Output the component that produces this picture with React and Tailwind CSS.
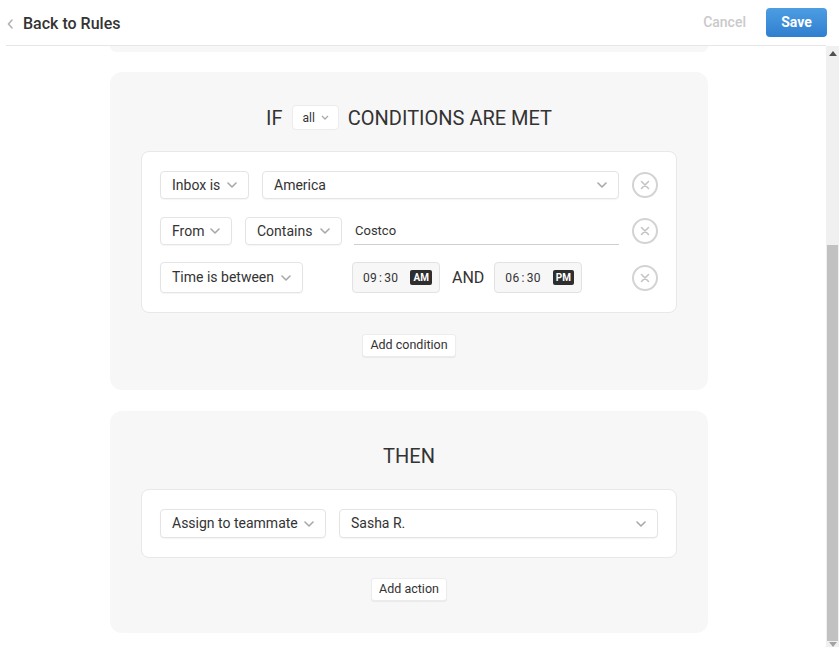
import React from "react";

const Chevron = ({ className = "" }) => (
  <svg width="10" height="6" viewBox="0 0 10 6" className={className}>
    <path d="M1 1l4 4 4-4" fill="none" stroke="#a8a8a8" strokeWidth="1.6" strokeLinecap="round" strokeLinejoin="round" />
  </svg>
);

const Select = ({ label, w, h = "h-[28px]" }) => (
  <div className={`${w} ${h} flex items-center justify-between bg-white border border-[#e4e4e4] rounded-[4px] shadow-[0_1px_1px_rgba(0,0,0,0.04)] pl-[11px] pr-[11px] text-[14px] text-[#333]`}>
    <span>{label}</span>
    <Chevron />
  </div>
);

const XCircle = () => (
  <div className="w-[26px] h-[26px] rounded-full border-2 border-[#d3d3d3] flex items-center justify-center">
    <svg width="10" height="10" viewBox="0 0 10 10">
      <path d="M1.5 1.5l7 7M8.5 1.5l-7 7" stroke="#c4c4c4" strokeWidth="1.6" strokeLinecap="round" />
    </svg>
  </div>
);

const TimeBox = ({ t, p }) => (
  <div className="w-[88px] h-[31px] flex items-center bg-[#f7f7f7] border border-[#e2e2e2] rounded-[4px] pl-[10px] text-[12px] text-[#333]">
    <span className="tracking-[0.3px]">{t.split(":")[0]}<span className="mx-[2px]">:</span>{t.split(":")[1]}</span>
    <span className="ml-[12px] bg-[#2e2e2e] text-white text-[10px] font-bold rounded-[2px] px-[3px] h-[15px] flex items-center">{p}</span>
  </div>
);

const SmallBtn = ({ children, w }) => (
  <div className={`${w} h-[23px] bg-white border border-[#ececec] rounded-[3px] shadow-[0_1px_1px_rgba(0,0,0,0.06)] flex items-center justify-center text-[12.5px] text-[#333]`}>
    {children}
  </div>
);

export default function App() {
  return (
    <div className="w-[839px] h-[647px] overflow-hidden bg-white flex flex-col" style={{ fontFamily: "Roboto, 'Liberation Sans', sans-serif" }}>
      <div className="h-[46px] shrink-0 flex items-center border-b border-[#e6e6e6] ml-[6px] mr-[13px]">
        <svg width="6" height="10" viewBox="0 0 6 10" className="ml-[1px] mt-[2px]">
          <path d="M5 1L1.5 5 5 9" fill="none" stroke="#b0b0b0" strokeWidth="1.5" strokeLinecap="round" />
        </svg>
        <span className="ml-[10px] mt-[2px] text-[16px] text-[#333] font-medium">Back to Rules</span>
        <span className="ml-auto text-[14px] font-medium text-[#cacaca]">Cancel</span>
        <div className="ml-[20px] w-[61px] h-[29px] rounded-[4px] bg-gradient-to-b from-[#4d9de2] to-[#2f7fd0] flex items-center justify-center text-white text-[14px] font-bold mr-[-1px]">
          Save
        </div>
      </div>
      <div className="flex-1 flex min-h-0">
        <div className="flex-1 min-h-0 overflow-hidden pl-[110px]">
          <div className="w-[598px] h-[6px] bg-[#f7f7f7] rounded-b-[12px]" />
          <div className="w-[598px] mt-[20px] bg-[#f7f7f7] rounded-[12px] pt-[33px] pb-[33px] pl-[31px] pr-[31px]">
            <div className="flex items-center justify-center gap-[8px] text-[20px] text-[#333] h-[25px]">
              <span className="mr-[2px]">IF</span>
              <div className="h-[25px] bg-white rounded-[4px] border border-[#ececec] flex items-center px-[9px] gap-[6px] text-[12px]">
                <span>all</span>
                <svg width="8" height="5" viewBox="0 0 8 5"><path d="M1 1l3 3 3-3" fill="none" stroke="#aaa" strokeWidth="1.3" /></svg>
              </div>
              <span className="ml-[1px]">CONDITIONS ARE MET</span>
            </div>
            <div className="mt-[21px] bg-white border border-[#e8e8e8] rounded-[8px] pt-[19px] pb-[19px] pl-[18px] pr-[18px]">
              <div className="flex items-center">
                <Select label="Inbox is" w="w-[89px]" />
                <div className="ml-[13px]"><Select label="America" w="w-[357px]" /></div>
                <div className="ml-auto"><XCircle /></div>
              </div>
              <div className="flex items-center mt-[18px]">
                <Select label="From" w="w-[72px]" />
                <div className="ml-[13px]"><Select label="Contains" w="w-[97px]" /></div>
                <div className="ml-[12px] w-[265px] h-[28px] border-b border-[#cfcfcf] flex items-center pl-[1px] text-[13px] text-[#333]">Costco</div>
                <div className="ml-auto"><XCircle /></div>
              </div>
              <div className="flex items-center mt-[17px]">
                <Select label="Time is between" w="w-[143px]" h="h-[31px]" />
                <div className="ml-[49px]"><TimeBox t="09:30" p="AM" /></div>
                <span className="ml-[12px] text-[16px] text-[#333]">AND</span>
                <div className="ml-[10px]"><TimeBox t="06:30" p="PM" /></div>
                <div className="ml-auto"><XCircle /></div>
              </div>
            </div>
            <div className="flex justify-center mt-[21px]">
              <SmallBtn w="w-[94px]">Add condition</SmallBtn>
            </div>
          </div>
          <div className="w-[598px] mt-[21px] bg-[#f7f7f7] rounded-[12px] pt-[32px] pb-[32px] pl-[31px] pr-[31px]">
            <div className="flex items-center justify-center text-[20px] text-[#333] h-[25px]">THEN</div>
            <div className="mt-[21px] bg-white border border-[#e8e8e8] rounded-[8px] pt-[19px] pb-[19px] pl-[18px] pr-[18px]">
              <div className="flex items-center">
                <Select label="Assign to teammate" w="w-[166px]" h="h-[29px]" />
                <div className="ml-[13px]"><Select label="Sasha R." w="w-[319px]" h="h-[29px]" /></div>
              </div>
            </div>
            <div className="flex justify-center mt-[20px]">
              <SmallBtn w="w-[76px]">Add action</SmallBtn>
            </div>
          </div>
        </div>
        <div className="w-[13px] bg-[#f0f0f0] flex flex-col items-center relative">
          <svg width="8" height="5" viewBox="0 0 8 5" className="mt-[5px]"><path d="M0 5L4 0l4 5z" fill="#505050" /></svg>
          <div className="w-[11px] bg-[#c1c1c1] mt-[189px] h-[401px]" />
          <svg width="8" height="5" viewBox="0 0 8 5" className="mt-[1px]"><path d="M0 0l4 5 4-5z" fill="#a3a3a3" /></svg>
        </div>
      </div>
    </div>
  );
}
